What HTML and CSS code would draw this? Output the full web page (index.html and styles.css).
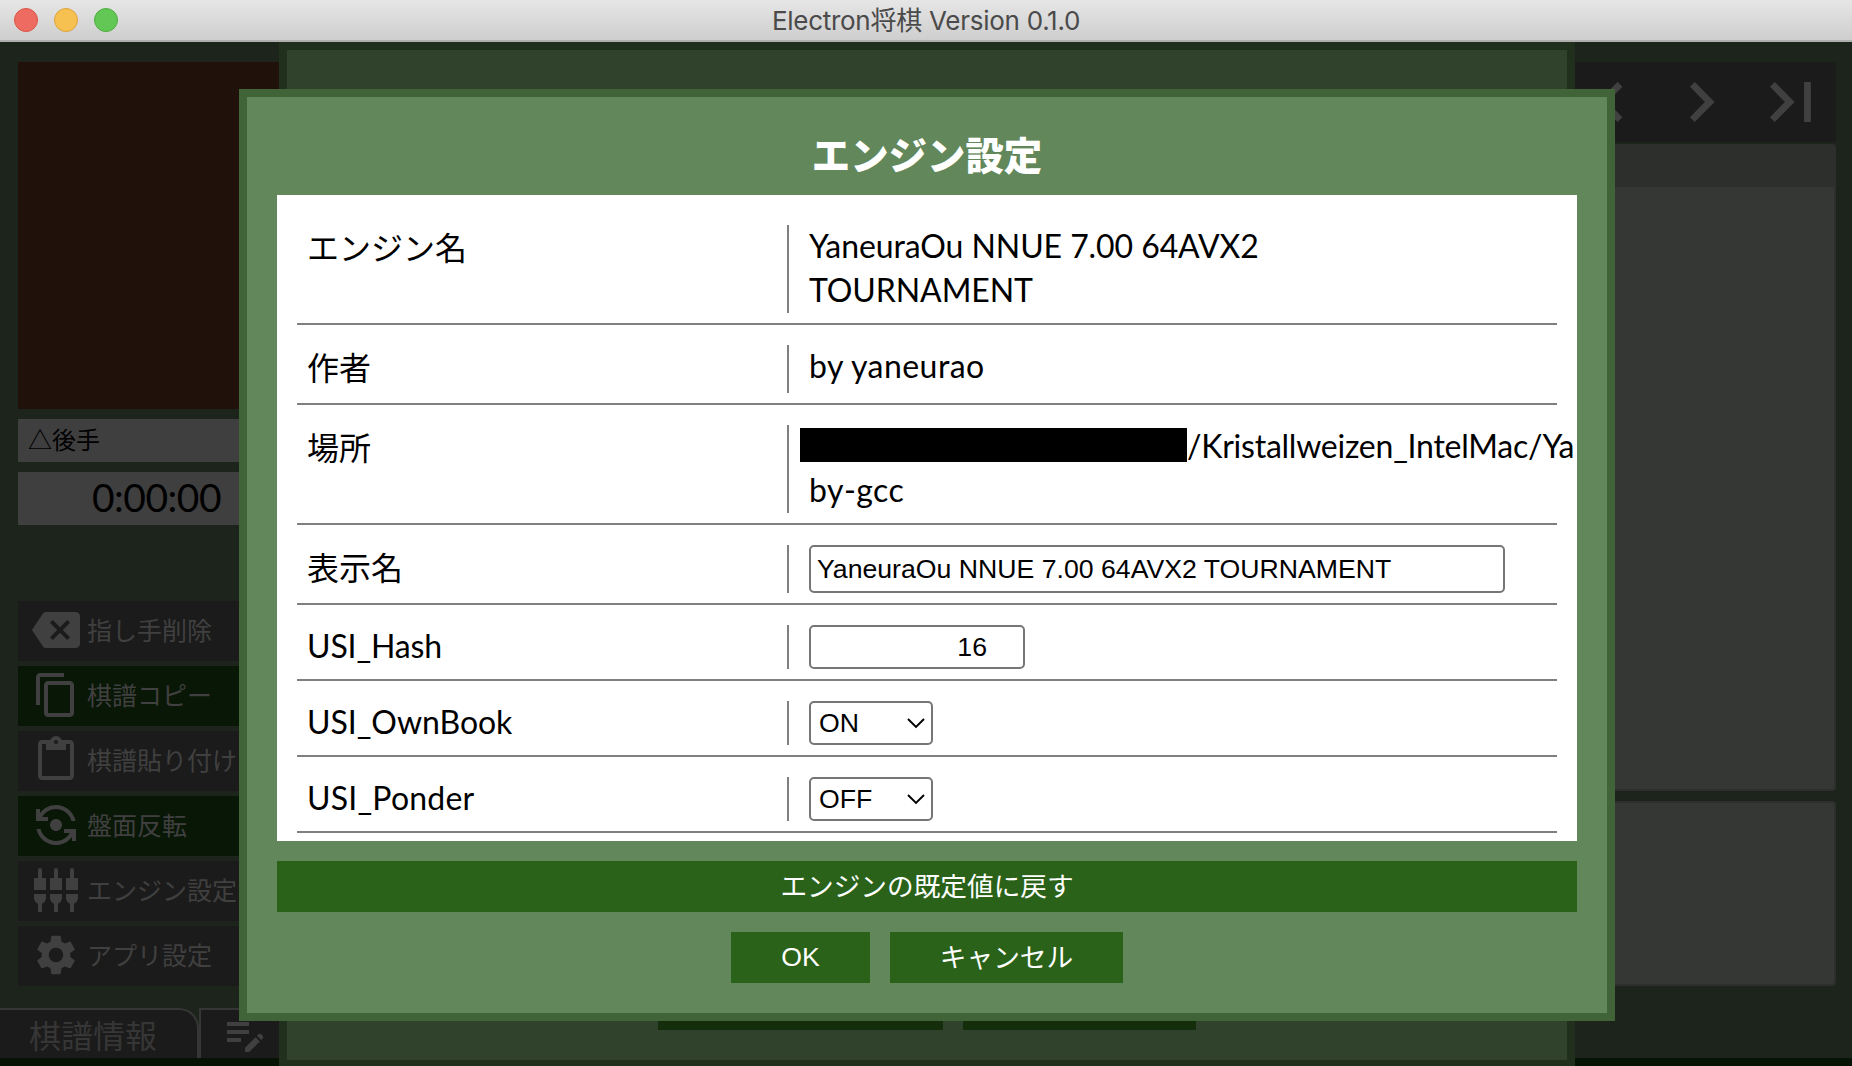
FILE: index.html
```html
<!DOCTYPE html>
<html lang="ja">
<head>
<meta charset="utf-8">
<title>Electron将棋</title>
<link rel="stylesheet" href="styles.css">
</head>
<body>
<div class="window">
  <header class="titlebar">
    <div class="lights"><i class="light red"></i><i class="light yellow"></i><i class="light green"></i></div>
    <div class="window-title"><span>Electron将棋 Version 0.1.0</span></div>
  </header>
  <main class="app">
    <div class="workspace">
      <section class="left-pane">
        <div class="board"></div>
        <div class="player">△後手</div>
        <div class="clock">0:00:00</div>
        <nav class="controls">
          <div class="control"><svg viewBox="0 0 24 24"><path d="M22 3H7c-.69 0-1.23.35-1.59.88L0 12l5.41 8.11c.36.53.9.89 1.59.89h15c1.1 0 2-.9 2-2V5c0-1.1-.9-2-2-2zm-3 12.59L17.59 17 14 13.41 10.41 17 9 15.59 12.59 12 9 8.41 10.41 7 14 10.59 17.59 7 19 8.41 15.41 12 19 15.59z"/></svg><span>指し手削除</span></div>
          <div class="control active"><svg viewBox="0 0 24 24"><path d="M16 1H4c-1.1 0-2 .9-2 2v14h2V3h12V1zm3 4H8c-1.1 0-2 .9-2 2v14c0 1.1.9 2 2 2h11c1.1 0 2-.9 2-2V7c0-1.1-.9-2-2-2zm0 16H8V7h11v14z"/></svg><span>棋譜コピー</span></div>
          <div class="control"><svg viewBox="0 0 24 24"><path d="M19 2h-4.18C14.4.84 13.3 0 12 0c-1.3 0-2.4.84-2.82 2H5c-1.1 0-2 .9-2 2v16c0 1.1.9 2 2 2h14c1.1 0 2-.9 2-2V4c0-1.1-.9-2-2-2zm-7 0c.55 0 1 .45 1 1s-.45 1-1 1-1-.45-1-1 .45-1 1-1zm7 18H5V4h2v3h10V4h2v16z"/></svg><span>棋譜貼り付け</span></div>
          <div class="control active"><svg viewBox="0 0 24 24"><path d="M9 12c0 1.66 1.34 3 3 3s3-1.34 3-3-1.34-3-3-3-3 1.34-3 3zM8 10V8H5.09C6.47 5.61 9.04 4 12 4c3.72 0 6.85 2.56 7.74 6h2.06c-.93-4.56-4.96-8-9.8-8-3.27 0-6.18 1.58-8 4.01V4H2v6h6zm8 4v2h2.91c-1.38 2.39-3.95 4-6.91 4-3.72 0-6.85-2.56-7.74-6H2.2c.93 4.56 4.96 8 9.8 8 3.27 0 6.18-1.58 8-4.01V20h2v-6h-6z"/></svg><span>盤面反転</span></div>
          <div class="control"><svg viewBox="0 0 24 24"><path d="M5 2c0-.55-.45-1-1-1s-1 .45-1 1v4H1v6h6V6H5V2zm4 14c0 1.3.84 2.4 2 2.82V23h2v-4.18c1.16-.41 2-1.51 2-2.82v-2H9v2zm-8 0c0 1.3.84 2.4 2 2.82V23h2v-4.18C6.16 18.4 7 17.3 7 16v-2H1v2zM21 6V2c0-.55-.45-1-1-1s-1 .45-1 1v4h-2v6h6V6h-2zm-8-4c0-.55-.45-1-1-1s-1 .45-1 1v4H9v6h6V6h-2V2zm4 14c0 1.3.84 2.4 2 2.82V23h2v-4.18c1.16-.41 2-1.51 2-2.82v-2h-6v2z"/></svg><span>エンジン設定</span></div>
          <div class="control"><svg viewBox="0 0 24 24"><path d="M19.14 12.94c.04-.3.06-.61.06-.94 0-.32-.02-.64-.07-.94l2.03-1.58c.18-.14.23-.41.12-.61l-1.92-3.32c-.12-.22-.37-.29-.59-.22l-2.39.96c-.5-.38-1.03-.7-1.62-.94l-.36-2.54c-.04-.24-.24-.41-.48-.41h-3.84c-.24 0-.43.17-.47.41l-.36 2.54c-.59.24-1.13.57-1.62.94l-2.39-.96c-.22-.08-.47 0-.59.22L2.74 8.87c-.12.21-.08.47.12.61l2.03 1.58c-.05.3-.09.63-.09.94s.02.64.07.94l-2.03 1.58c-.18.14-.23.41-.12.61l1.92 3.32c.12.22.37.29.59.22l2.39-.96c.5.38 1.03.7 1.62.94l.36 2.54c.05.24.24.41.48.41h3.84c.24 0 .44-.17.47-.41l.36-2.54c.59-.24 1.13-.56 1.62-.94l2.39.96c.22.08.47 0 .59-.22l1.92-3.32c.12-.22.07-.47-.12-.61l-2.01-1.58zM12 15.6c-1.98 0-3.6-1.62-3.6-3.6s1.62-3.6 3.6-3.6 3.6 1.62 3.6 3.6-1.62 3.6-3.6 3.6z"/></svg><span>アプリ設定</span></div>
        </nav>
      </section>
      <section class="right-pane">
        <div class="record-nav">
          <svg viewBox="0 0 261 80"><path d="M45 22.3 27.5 40 45 57.7M117.3 22.3 134.8 40l-17.5 17.7M197.3 22.3 214.8 40l-17.5 17.7M232.5 20v40"/></svg>
        </div>
        <div class="record"><div class="record-head"></div></div>
        <div class="comment"></div>
      </section>
    </div>
    <footer class="tabs">
      <div class="tab first">棋譜情報</div>
      <div class="tab second"><svg viewBox="0 0 24 24"><path d="M3 10h11v2H3v-2zm0-2h11V6H3v2zm0 8h7v-2H3v2zm15.01-3.13.71-.71c.39-.39 1.02-.39 1.41 0l.71.71c.39.39.39 1.02 0 1.41l-.71.71-2.12-2.12zm-.71.71-5.3 5.3V21h2.12l5.3-5.3-2.12-2.12z"/></svg></div>
    </footer>
  </main>

  <div class="back-dialog"><div class="back-buttons"><i class="back-add"></i><i class="back-close"></i></div></div>

  <div class="dialog">
    <h1 class="dialog-title">エンジン設定</h1>
    <div class="form">
      <div class="row"><div class="label">エンジン名</div><div class="value"><span class="engine">YaneuraOu NNUE 7.00 64AVX2</span><br><span class="engine">TOURNAMENT</span></div></div>
      <div class="row"><div class="label">作者</div><div class="value"><span class="author">by yaneurao</span></div></div>
      <div class="row"><div class="label">場所</div><div class="value path"><i class="redacted"></i><span class="folder">/Kristallweizen_IntelMac/Ya</span><br><span class="author">by-gcc</span></div></div>
      <div class="row"><div class="label">表示名</div><div class="value"><div class="field text">YaneuraOu NNUE 7.00 64AVX2 TOURNAMENT</div></div></div>
      <div class="row"><div class="label latin hash">USI_Hash</div><div class="value"><div class="field number">16</div></div></div>
      <div class="row"><div class="label latin">USI_OwnBook</div><div class="value"><div class="field select">ON<svg viewBox="0 0 20 12"><path d="m2 2 8 8 8-8"/></svg></div></div></div>
      <div class="row"><div class="label latin ponder">USI_Ponder</div><div class="value"><div class="field select">OFF<svg viewBox="0 0 20 12"><path d="m2 2 8 8 8-8"/></svg></div></div></div>
    </div>
    <div class="button reset">エンジンの既定値に戻す</div>
    <div class="actions"><div class="button ok">OK</div><div class="button cancel">キャンセル</div></div>
  </div>
</div>
</body>
</html>
```
FILE: styles.css
```css
* { box-sizing: border-box; }
body { margin: 0; }

.window {
  position: relative;
  display: flex;
  flex-direction: column;
  width: 1852px;
  height: 1066px;
  overflow: hidden;
  font-family: Lato, "Noto Sans CJK JP", sans-serif;
  background: #1c241b;
}

.titlebar {
  flex: none;
  display: grid;
  grid-template-columns: 200px 1fr 200px;
  height: 42px;
  background: linear-gradient(#e6e6e6, #cecece);
  border-bottom: 2px solid #b0b0b0;
}
.lights { display: flex; gap: 16px; padding: 8px 0 0 14px; }
.light { width: 24px; height: 24px; border-radius: 50%; border: 1px solid; }
.light.red { background: #ed6b60; border-color: #dc5549; }
.light.yellow { background: #f6c150; border-color: #dfa33c; }
.light.green { background: #62c755; border-color: #4fad41; }
.window-title {
  text-align: center;
  font: 26px/42px Inter, "Noto Sans CJK JP", sans-serif;
  letter-spacing: -0.27px;
  color: #4a4a4a;
  white-space: nowrap;
}

.app { flex: 1; display: flex; flex-direction: column; justify-content: space-between; }
.workspace { display: flex; justify-content: space-between; padding: 20px 16px 0 18px; }
.left-pane { width: 261px; }
.right-pane { width: 261px; }

.board { height: 347px; background: #20120a; }
.player {
  height: 43px;
  margin-top: 10px;
  padding-left: 10px;
  background: #3f3f3f;
  font-size: 24px;
  line-height: 41px;
}
.clock {
  height: 53px;
  margin-top: 10px;
  padding-left: 74px;
  background: #3f3f3f;
  font-size: 39px;
  line-height: 51px;
  letter-spacing: -0.5px;
}
.controls { display: flex; flex-direction: column; gap: 5.5px; margin-top: 76px; }
.control {
  display: flex;
  align-items: flex-start;
  height: 59.6px;
  padding: 4.5px 0 0 14px;
  background: #1b1b1b;
  color: #404040;
  font-size: 25px;
  line-height: 49px;
  white-space: nowrap;
}
.control.active { background: #091706; }
.control svg { flex: none; width: 48px; height: 48px; margin-right: 7px; fill: #404040; }

.record-nav { height: 80px; background: #1b1b1b; }
.record-nav svg { display: block; width: 261px; height: 80px; fill: none; stroke: #404040; stroke-width: 6.8; }
.record {
  height: 647px;
  margin-top: 2px;
  background: #353734;
  border: 2px solid #2d2f2c;
  border-radius: 4px;
}
.record-head { height: 41px; background: #2d2f2c; }
.comment {
  height: 185px;
  margin-top: 10px;
  background: #353734;
  border: 2px solid #2d2f2c;
  border-radius: 4px;
}

.tabs { display: flex; height: 58px; border-bottom: 8px solid #051404; }
.tab { border-top: 2px solid #363636; border-right: 2px solid #363636; background: #1b1b1b; }
.tab.first {
  width: 199px;
  padding-left: 29px;
  border-top-right-radius: 20px;
  color: #363636;
  font-size: 32px;
  line-height: 52px;
}
.tab.second { width: 120px; padding-left: 20px; border-left: 2px solid #363636; }
.tab.second svg { display: block; width: 48px; height: 48px; fill: #404040; }

/* Engine list dialog, dimmed behind the open one */
.back-dialog {
  position: absolute;
  left: 279px;
  top: 42px;
  width: 1296px;
  height: 1026px;
  border: 8px solid #20301c;
  background: #30422c;
  display: flex;
  align-items: flex-end;
  justify-content: center;
  padding-bottom: 30px;
}
.back-buttons { display: flex; gap: 20px; }
.back-buttons i { height: 51px; background: #142e0c; }
.back-add { width: 285px; }
.back-close { width: 233px; }

.dialog {
  position: absolute;
  left: 239px;
  top: 89px;
  width: 1376px;
  height: 932px;
  padding: 30px;
  border: 8px solid #406338;
  background: #61875a;
}
.dialog-title {
  margin: 0;
  height: 68px;
  text-align: center;
  font: 900 38.4px/52px "Noto Sans CJK JP", sans-serif;
  color: #fff;
}
.form { height: 646px; padding: 10px 20px 0; overflow: hidden; background: #fff; }
.row { display: flex; padding: 20px 0 10px; border-bottom: 2px solid #808080; font-size: 32px; line-height: 44px; color: #000; }
.label { width: 490px; padding-left: 10px; min-height: 48px; line-height: 46px; }
.label.latin { min-height: 44px; height: 44px; letter-spacing: -0.05px; line-height: 42px; }
.label.hash { letter-spacing: -0.15px; }
.label.ponder { letter-spacing: 0.2px; }
.value { width: 770px; padding-left: 20px; border-left: 2px solid #808080; white-space: nowrap; }
.value > span { position: relative; top: -1px; }
.engine { letter-spacing: -0.08px; }
.author { letter-spacing: 0.45px; }
.folder { letter-spacing: -0.24px; }
.redacted { display: inline-block; width: 387px; height: 34px; margin-left: -9px; background: #000; vertical-align: -3px; }
.path { height: 88px; }

.field {
  height: 44px;
  border: 2px solid #767676;
  border-radius: 5px;
  font: 26.67px/40px "Liberation Sans", Arial, sans-serif;
}
.field.text { width: 696px; height: 48px; padding-left: 6px; line-height: 44px; }
.field.number { width: 216px; padding-right: 36px; text-align: right; }
.field.select { display: flex; align-items: center; justify-content: space-between; width: 124px; padding: 0 5px 0 8px; }
.field.select svg { width: 20px; height: 12px; fill: none; stroke: #000; stroke-width: 1.9; }

.button {
  height: 51px;
  background: #296218;
  color: #fff;
  text-align: center;
  font: 26.67px/51px "Liberation Sans", "Noto Sans CJK JP", sans-serif;
}
.reset { margin-top: 20px; line-height: 52px; }
.actions { display: flex; justify-content: center; gap: 20px; margin-top: 20px; }
.ok { width: 139px; }
.cancel { width: 233px; line-height: 52px; }
```
